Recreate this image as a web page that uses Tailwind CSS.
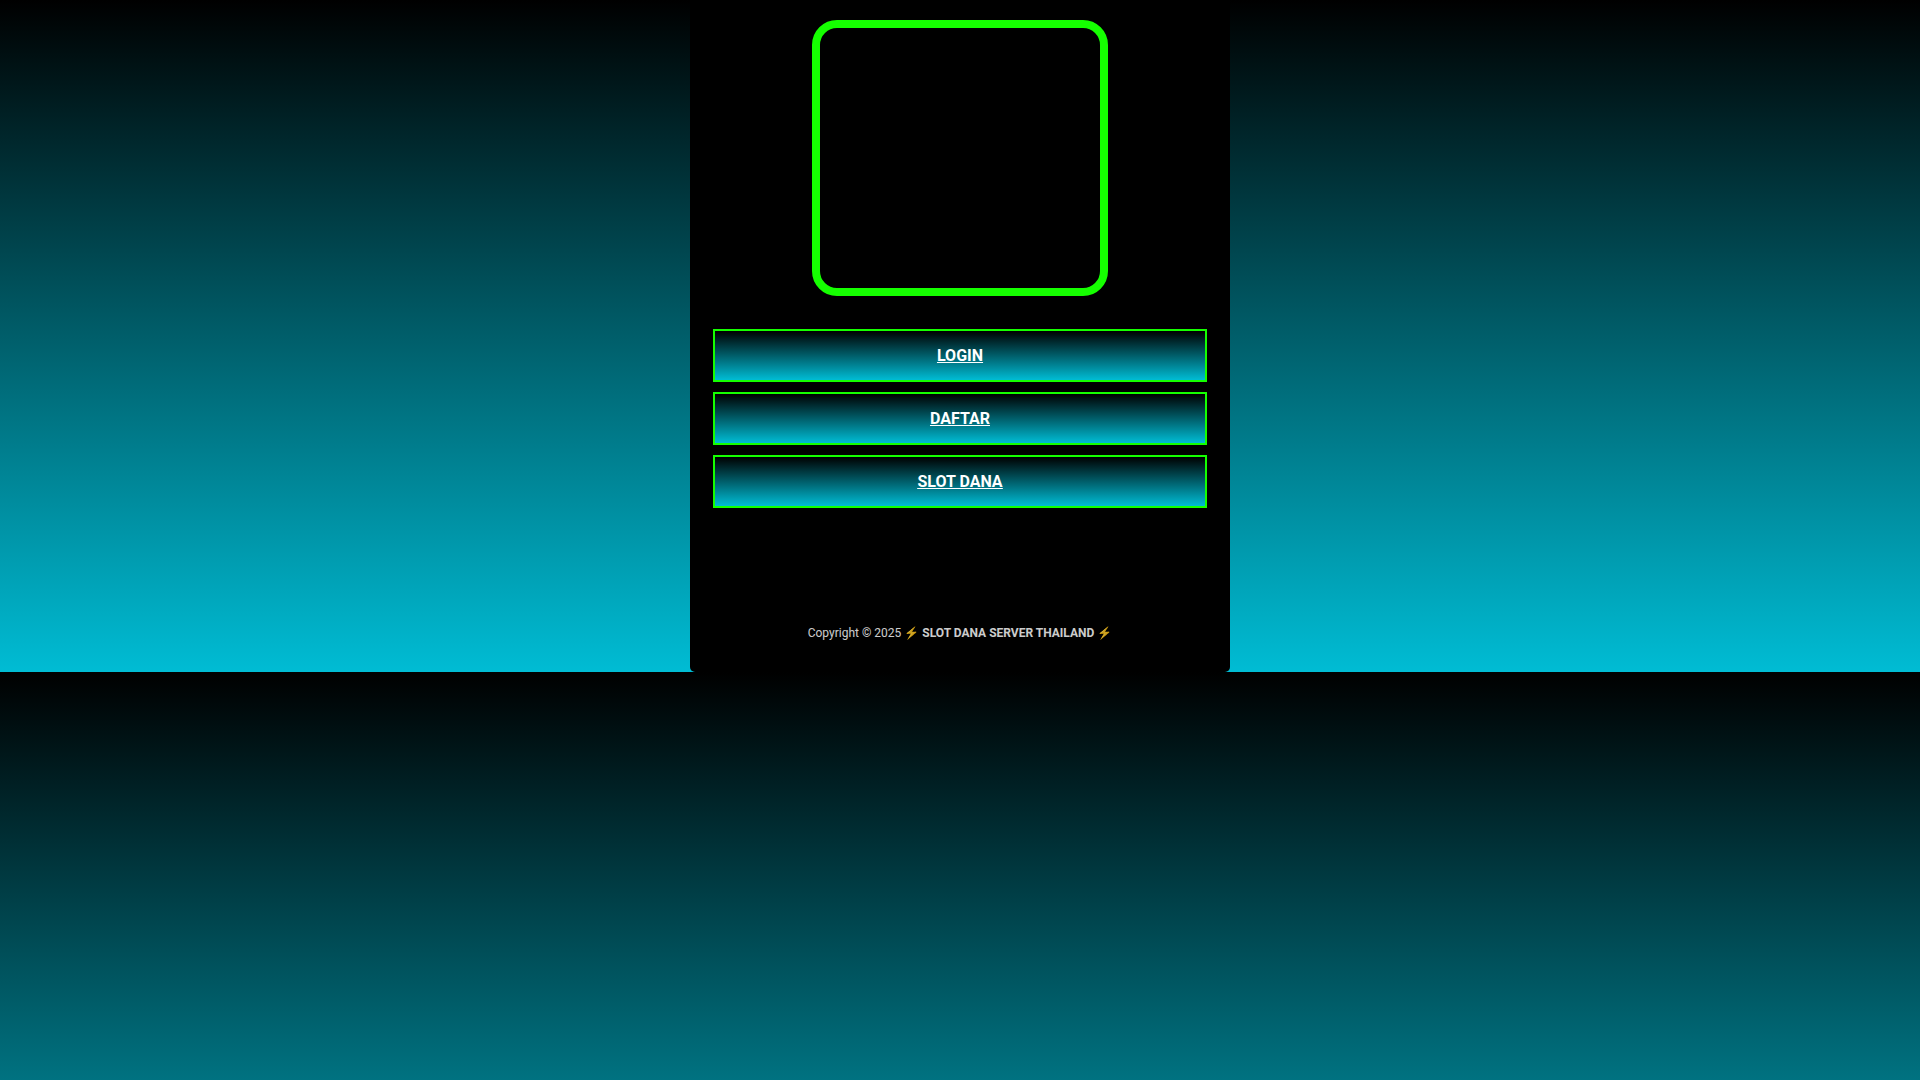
<!DOCTYPE html>
<html lang="id">
<head>
    <meta charset="UTF-8">
    <meta name="viewport" content="width=device-width, initial-scale=1.0">
    <title>SLOT DANA SERVER THAILAND</title>
    <script src="https://cdn.jsdelivr.net/npm/@tailwindcss/browser@4"></script>
</head>
<body class="bg-[linear-gradient(#000000,#00bcd4)] font-[Roboto,sans-serif] text-white">
    <div class="mx-auto flex max-w-[540px] flex-col rounded-b-[5px] bg-black px-[23px] pt-5 pb-[29px]">
        <!-- Banner -->
        <div class="mx-auto h-[276px] w-[296px] rounded-[25px] border-8 border-[#15ff00]"></div>

        <!-- Links -->
        <nav class="mt-[33px] flex flex-col gap-[10px] text-center font-bold underline">
            <a href="#login" class="border-2 border-[#15ff00] bg-[linear-gradient(#000000,#00bcd4)] py-3 leading-[25px]">LOGIN</a>
            <a href="#daftar" class="border-2 border-[#15ff00] bg-[linear-gradient(#000000,#00bcd4)] py-3 leading-[25px]">DAFTAR</a>
            <a href="#slot-dana" class="border-2 border-[#15ff00] bg-[linear-gradient(#000000,#00bcd4)] py-3 leading-[25px]">SLOT DANA</a>
        </nav>

        <!-- Footer -->
        <footer class="mt-[115px] text-center text-xs leading-5 opacity-80">
            Copyright © 2025 <a href="#home" class="font-bold">⚡ SLOT DANA SERVER THAILAND ⚡</a>
        </footer>
    </div>
</body>
</html>
